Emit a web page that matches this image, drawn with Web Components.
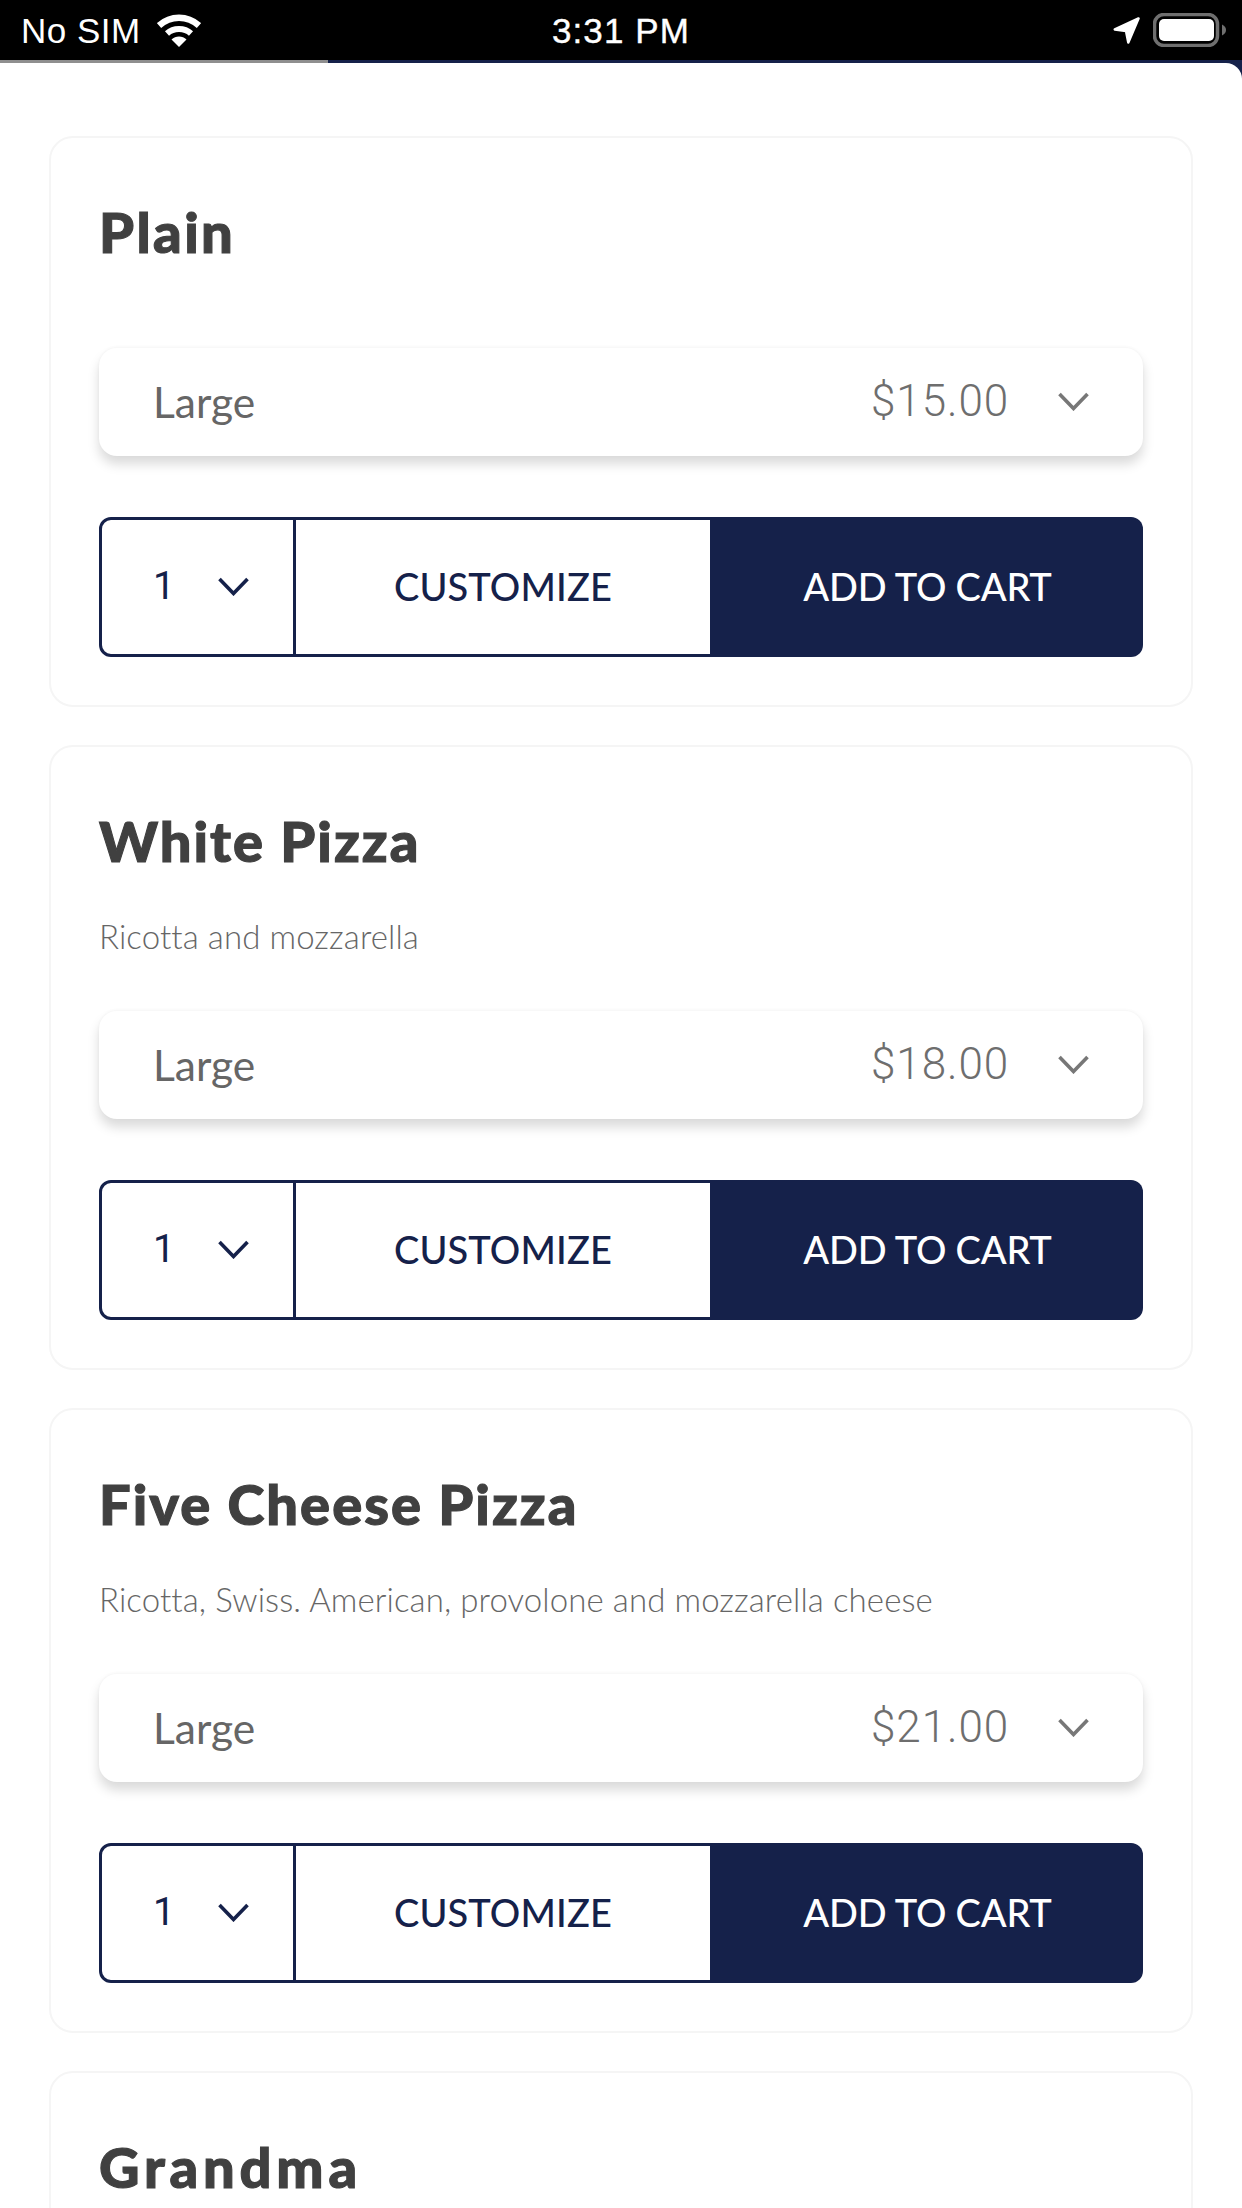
<!DOCTYPE html>
<html lang="en">
<head>
<meta charset="utf-8">
<title>Menu</title>
<style>
html,body{margin:0;padding:0;background:#fff}
</style>
</head>
<body>
<app-shell>
  <status-bar></status-bar>
  <load-bar></load-bar>
  <menu-sheet>
    <menu-card no-desc track="2.4" name="Plain" price="$15.00"></menu-card>
    <menu-card track="2" name="White Pizza" desc="Ricotta and mozzarella" price="$18.00"></menu-card>
    <menu-card track="2" name="Five Cheese Pizza" desc="Ricotta, Swiss. American, provolone and mozzarella cheese" price="$21.00"></menu-card>
    <menu-card no-desc teaser track="4.8" name="Grandma"></menu-card>
  </menu-sheet>
</app-shell>
<script>
const FONT = '"Lato","Open Sans",sans-serif';
const NAVY = '#15214a';
function def(name, html, setup){
  customElements.define(name, class extends HTMLElement{
    connectedCallback(){
      if(this.shadowRoot) return;
      const r = this.attachShadow({mode:'open'});
      r.innerHTML = typeof html === 'function' ? html(this) : html;
      if(setup) setup(this, r);
    }
  });
}
def('app-shell', `<style>
:host{display:flex;flex-direction:column;width:1242px;height:2208px;overflow:hidden;background:${NAVY};font-family:${FONT}}
</style><slot></slot>`);

def('status-bar', `<style>
:host{display:grid;grid-template-columns:1fr auto 1fr;align-items:center;height:60px;flex:none;background:#000;color:#fff;font:35px "Liberation Sans",Arial,sans-serif}
.l{display:flex;align-items:center;padding-left:21px;gap:16px}
.l span{letter-spacing:.5px}
.t{letter-spacing:1.1px;-webkit-text-stroke:.4px #fff}
.r{display:flex;align-items:center;justify-content:flex-end;padding-right:16px;gap:13px}
svg{display:block}
.l span,.t{position:relative;top:1px}
</style>
<div class="l"><span>No SIM</span>
<svg width="44" height="33" viewBox="0 0 44 33"><path d="M2 11.5C13.500 1 30.500 1 42 11.500" fill="none" stroke="#fff" stroke-width="6.500"/><path d="M10 19.500C16.500 13.500 27.500 13.500 34 19.500" fill="none" stroke="#fff" stroke-width="6"/><path d="M14.500 25.500C18.500 21.500 25.500 21.500 29.500 25.500L22 33Z" fill="#fff"/></svg></div>
<div class="t">3:31 PM</div>
<div class="r">
<svg width="27" height="27" viewBox="0 0 27 27"><path d="M25.500 1.500L1.800 12.500L13 14L15.300 25.500Z" fill="#fff" stroke="#fff" stroke-width="2.500" stroke-linejoin="round"/></svg>
<svg width="73" height="34" viewBox="0 0 73 34"><rect x="1.500" y="1.500" width="63" height="31" rx="9.500" fill="none" stroke="#6f6f6f" stroke-width="3.500"/><rect x="6" y="6" width="55" height="22" rx="5" fill="#fff"/><path d="M69 11.500C72 13 73 15 73 17C73 19 72 21 69 22.500Z" fill="#6f6f6f"/></svg>
</div>`);

def('load-bar', `<style>
:host{display:flex;height:3px;flex:none;background:${NAVY}}
i{display:block;width:328px;background:#8f8f8f}
</style><i></i>`);

def('menu-sheet', `<style>
:host{display:flex;flex-direction:column;gap:38px;flex:1;min-height:0;background:#fff;border-top-right-radius:16px;padding:73px 49px 0}
</style><slot></slot>`);

def('chevron-icon', `<style>
:host{display:block;width:31px;height:19px;color:inherit}
svg{display:block}
</style><svg width="31" height="19" viewBox="0 0 31 19"><path d="M1.500 2L15.500 16.500L29.500 2" fill="none" stroke="currentColor" stroke-width="3.600"/></svg>`);

def('size-select', el=>`<style>
:host{display:flex;align-items:center;height:108px;box-sizing:border-box;padding:0 54px 0 54px;border-radius:18px;background:#fff;box-shadow:0 8px 12px rgba(0,0,0,.15),0 -1px 3px rgba(0,0,0,.035);font-family:${FONT}}
.n{flex:1;font-size:42.5px;color:#666;font-weight:400;padding-bottom:2px}
.p{font-family:Roboto,${FONT};font-size:44px;font-weight:300;color:#6e6e6e;letter-spacing:.9px;margin-right:49px;padding-bottom:3px}
chevron-icon{color:#777;margin-bottom:2px}
</style><span class="n">${el.getAttribute('label')}</span><span class="p">${el.getAttribute('price')}</span><chevron-icon></chevron-icon>`);

def('order-row', `<style>
:host{display:flex;height:140px;font-family:${FONT};font-size:38px;font-weight:500}
.q{flex:none;width:197px;box-sizing:border-box;border:3px solid ${NAVY};border-radius:12px 0 0 12px;display:flex;align-items:center;padding:0 0 2px 51px;color:${NAVY};gap:50px}
.q b{font-family:Roboto,${FONT};font-weight:400;width:15px;font-size:39px}
.c{flex:1;box-sizing:border-box;border:solid ${NAVY};border-width:3px 0;padding-bottom:2px;display:flex;align-items:center;justify-content:center;color:${NAVY};letter-spacing:.1px}
.a{flex:none;width:433px;box-sizing:border-box;background:${NAVY};border-radius:0 12px 12px 0;padding:0 0 2px 2px;display:flex;align-items:center;justify-content:center;color:#fff;letter-spacing:-.2px}
</style>
<div class="q"><b>1</b><chevron-icon></chevron-icon></div>
<div class="c">CUSTOMIZE</div>
<div class="a">ADD TO CART</div>`);

def('menu-card', el=>{
  const teaser = el.hasAttribute('teaser');
  return `<style>
:host{display:flex;flex-direction:column;flex:none;box-sizing:border-box;border:2px solid #f5f5f5;border-radius:24px;background:#fff;padding:48px;font-family:${FONT}}
:host([teaser]){min-height:570px}
h2{margin:0;height:72px;line-height:92px;font-size:56px;font-weight:900;color:#404040;letter-spacing:${el.getAttribute('track')||2}px;-webkit-text-stroke:1.1px #404040;white-space:nowrap}
p{margin:47px 0 0;height:44px;line-height:44px;font-size:33px;font-weight:300;letter-spacing:.1px;color:#666;white-space:nowrap}
size-select{margin-top:53px}
:host([no-desc]) size-select{margin-top:90px}
:host([no-desc]) p{display:none}
order-row{margin-top:61px}
</style>
<h2>${el.getAttribute('name')}</h2>
<p>${el.getAttribute('desc')||''}</p>
${teaser?'':`<size-select label="Large" price="${el.getAttribute('price')}"></size-select>
<order-row></order-row>`}`;
});
</script>
</body>
</html>
